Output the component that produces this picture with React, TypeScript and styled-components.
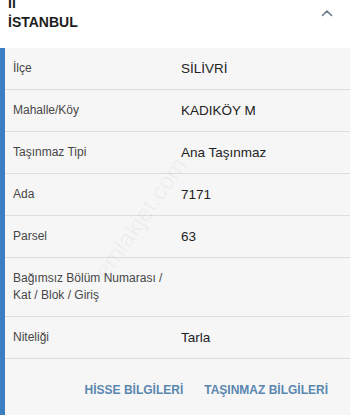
import React from "react";
import styled, { createGlobalStyle } from "styled-components";

const Global = createGlobalStyle`
  html, body { margin: 0; padding: 0; background: #ffffff; }
  body { font-family: "Liberation Sans", Arial, Helvetica, sans-serif; overflow: hidden; }
`;

const Page = styled.div`
  width: 350px;
  height: 415px;
  position: relative;
  overflow: hidden;
  background: #ffffff;
`;

const Header = styled.div`
  height: 48px;
  display: flex;
  justify-content: space-between;
  align-items: flex-start;
  padding: 0 17px 0 8px;
  box-sizing: border-box;
`;

const Title = styled.div`
  margin-top: -6px;
  font-size: 14px;
  line-height: 19px;
  font-weight: 700;
  color: #1e1e1e;
`;

const Toggle = styled.button`
  border: 0;
  background: none;
  padding: 0;
  margin-top: 9px;
  width: 12px;
  height: 8px;
  display: flex;
  color: #6b7a88;
`;

const Panel = styled.div`
  border-left: 5px solid #3b7ec2;
  background: #f6f6f6;
  height: 367px;
  box-sizing: border-box;
`;

const Row = styled.div<{ $tall?: boolean }>`
  display: grid;
  grid-template-columns: 168px 1fr;
  align-items: center;
  height: ${(p) => (p.$tall ? "59px" : "42px")};
  padding-left: 8px;
  border-bottom: 1px solid #dddddd;
  box-sizing: border-box;
`;

const Label = styled.div`
  font-size: 12px;
  line-height: 17px;
  color: #464646;
`;

const Value = styled.div`
  font-size: 13.5px;
  color: #222222;
`;

const Actions = styled.div`
  display: flex;
  justify-content: flex-end;
  gap: 21px;
  padding: 23px 22px 0 0;
`;

const ActionButton = styled.button`
  border: 0;
  background: none;
  padding: 0;
  font-family: "Liberation Sans", Arial, Helvetica, sans-serif;
  font-size: 12px;
  font-weight: 700;
  line-height: 16px;
  color: #5a87b0;
`;

const Watermark = styled.div`
  position: absolute;
  left: 100px;
  top: 262px;
  font-size: 24px;
  color: rgba(0, 0, 0, 0.05);
  transform: rotate(-55deg);
  transform-origin: left center;
  white-space: nowrap;
  pointer-events: none;
`;

const rows: { label: string; value: string; tall?: boolean }[] = [
  { label: "İlçe", value: "SİLİVRİ" },
  { label: "Mahalle/Köy", value: "KADIKÖY M" },
  { label: "Taşınmaz Tipi", value: "Ana Taşınmaz" },
  { label: "Ada", value: "7171" },
  { label: "Parsel", value: "63" },
  { label: "Bağımsız Bölüm Numarası / Kat / Blok / Giriş", value: "", tall: true },
  { label: "Niteliği", value: "Tarla" },
];

export default function App() {
  return (
    <Page>
      <Global />
      <Header>
        <Title>
          <div>İl</div>
          <div>İSTANBUL</div>
        </Title>
        <Toggle aria-label="collapse">
          <svg width="12" height="8" viewBox="0 0 12 8" fill="none">
            <path d="M1.5 6.5 L6 2 L10.5 6.5" stroke="currentColor" strokeWidth="1.6" strokeLinecap="round" strokeLinejoin="round" />
          </svg>
        </Toggle>
      </Header>
      <Panel>
        {rows.map((r) => (
          <Row key={r.label} $tall={r.tall}>
            <Label>
              {r.tall ? (
                <>
                  Bağımsız Bölüm Numarası /
                  <br />
                  Kat / Blok / Giriş
                </>
              ) : (
                r.label
              )}
            </Label>
            <Value>{r.value}</Value>
          </Row>
        ))}
        <Actions>
          <ActionButton>HİSSE BİLGİLERİ</ActionButton>
          <ActionButton>TAŞINMAZ BİLGİLERİ</ActionButton>
        </Actions>
      </Panel>
      <Watermark>emlakjet.com</Watermark>
    </Page>
  );
}
